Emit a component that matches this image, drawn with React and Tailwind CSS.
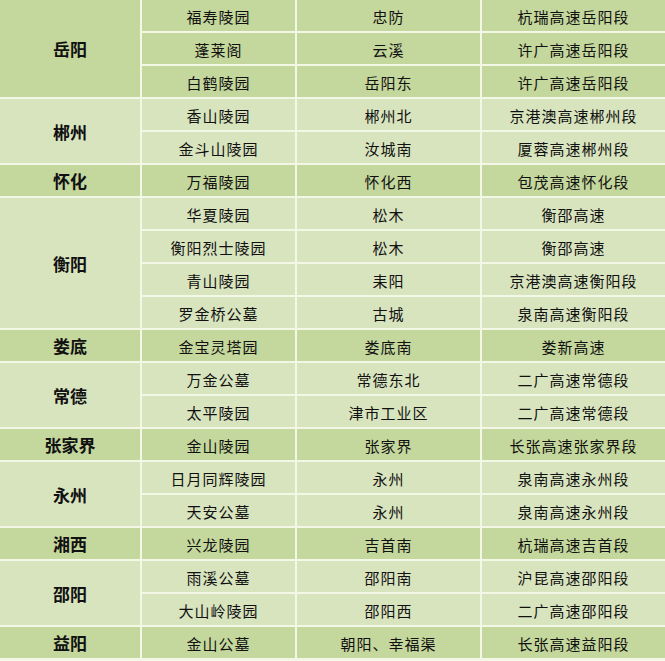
const groups = [
  { city: '岳阳', rows: [['福寿陵园', '忠防', '杭瑞高速岳阳段'], ['蓬莱阁', '云溪', '许广高速岳阳段'], ['白鹤陵园', '岳阳东', '许广高速岳阳段']] },
  { city: '郴州', rows: [['香山陵园', '郴州北', '京港澳高速郴州段'], ['金斗山陵园', '汝城南', '厦蓉高速郴州段']] },
  { city: '怀化', rows: [['万福陵园', '怀化西', '包茂高速怀化段']] },
  { city: '衡阳', rows: [['华夏陵园', '松木', '衡邵高速'], ['衡阳烈士陵园', '松木', '衡邵高速'], ['青山陵园', '耒阳', '京港澳高速衡阳段'], ['罗金桥公墓', '古城', '泉南高速衡阳段']] },
  { city: '娄底', rows: [['金宝灵塔园', '娄底南', '娄新高速']] },
  { city: '常德', rows: [['万金公墓', '常德东北', '二广高速常德段'], ['太平陵园', '津市工业区', '二广高速常德段']] },
  { city: '张家界', rows: [['金山陵园', '张家界', '长张高速张家界段']] },
  { city: '永州', rows: [['日月同辉陵园', '永州', '泉南高速永州段'], ['天安公墓', '永州', '泉南高速永州段']] },
  { city: '湘西', rows: [['兴龙陵园', '吉首南', '杭瑞高速吉首段']] },
  { city: '邵阳', rows: [['雨溪公墓', '邵阳南', '沪昆高速邵阳段'], ['大山岭陵园', '邵阳西', '二广高速邵阳段']] },
  { city: '益阳', rows: [['金山公墓', '朝阳、幸福渠', '长张高速益阳段']] },
];

const spans = ['row-span-1', 'row-span-2', 'row-span-3', 'row-span-4'];

function App() {
  return (
    <div
      className="grid w-[665px] grid-cols-[140px_153px_183px_183px] auto-rows-[31px] gap-[2px] bg-[#f3f7e6] pb-[3px] text-[#111]"
      style={{ fontFamily: '"Noto Sans CJK SC", "Noto Sans", sans-serif' }}
    >
      {groups.map((g, gi) => {
        const bg = gi % 2 === 0 ? 'bg-[#c4d79c]' : 'bg-[#d8e4be]';
        return [
          <div
            key={g.city}
            className={`${spans[g.rows.length - 1]} ${bg} flex items-center justify-center pt-[1px] text-[17px] font-bold`}
          >
            {g.city}
          </div>,
          ...g.rows.map((r, ri) =>
            r.map((t, ci) => (
              <div
                key={`${gi}-${ri}-${ci}`}
                className={`${bg} flex items-center justify-center pt-[3px] text-[15px] tracking-[1px]`}
              >
                {t}
              </div>
            ))
          ),
        ];
      })}
    </div>
  );
}

export default App;
